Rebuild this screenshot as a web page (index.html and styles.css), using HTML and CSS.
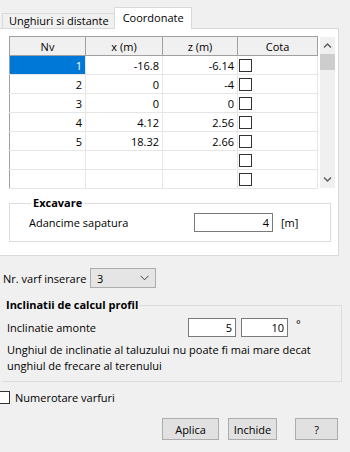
FILE: index.html
```html
<!DOCTYPE html>
<html lang="ro">
  <head>
    <meta charset="UTF-8" />
    <meta name="viewport" content="width=device-width, initial-scale=1.0" />
    <title>Coordonate</title>
    <link rel="stylesheet" href="styles.css">
  </head>
  <body>
    <div class="tabs">
      <div class="tab">Unghiuri si distante</div>
      <div class="tab active">Coordonate</div>
    </div>
    <div class="panel">
      <div class="grid">
        <table class="coords">
          <tr>
            <th class="c-nv">Nv</th>
            <th class="c-x">x (m)</th>
            <th class="c-z">z (m)</th>
            <th class="c-cota">Cota</th>
          </tr>
          <tr><td class="sel">1</td><td>-16.8</td><td>-6.14</td><td class="cota"><span class="check"></span></td></tr>
          <tr><td>2</td><td>0</td><td>-4</td><td class="cota"><span class="check"></span></td></tr>
          <tr><td>3</td><td>0</td><td>0</td><td class="cota"><span class="check"></span></td></tr>
          <tr><td>4</td><td>4.12</td><td>2.56</td><td class="cota"><span class="check"></span></td></tr>
          <tr><td>5</td><td>18.32</td><td>2.66</td><td class="cota"><span class="check"></span></td></tr>
          <tr><td></td><td></td><td></td><td class="cota"><span class="check"></span></td></tr>
          <tr><td></td><td></td><td></td><td class="cota"><span class="check"></span></td></tr>
        </table>
        <div class="vscroll">
          <svg class="arrow" width="15" height="17" viewBox="0 0 15 17">
            <path d="M4 10.5 L7.5 7 L11 10.5" fill="none" stroke="#606060" stroke-width="1.5" />
          </svg>
          <div class="thumb"></div>
          <div class="track"></div>
          <svg class="arrow" width="15" height="17" viewBox="0 0 15 17">
            <path d="M4 6.5 L7.5 10 L11 6.5" fill="none" stroke="#606060" stroke-width="1.5" />
          </svg>
        </div>
      </div>
      <fieldset class="group excavare">
        <legend>Excavare</legend>
        <div class="field-row">
          <span class="label">Adancime sapatura</span>
          <input type="text" class="num depth" value="4" />
          <span class="unit">[m]</span>
        </div>
      </fieldset>
    </div>

    <div class="insert-row">
      <span class="label">Nr. varf inserare</span>
      <div class="combo">
        <span>3</span>
        <svg width="9" height="6" viewBox="0 0 9 6">
          <path d="M0.5 0.8 L4.5 4.8 L8.5 0.8" fill="none" stroke="#404040" stroke-width="1" />
        </svg>
      </div>
    </div>

    <fieldset class="group profil">
      <legend>Inclinatii de calcul profil</legend>
      <div class="field-row">
        <span class="label">Inclinatie amonte</span>
        <input type="text" class="num a1" value="5" />
        <input type="text" class="num a2" value="10" />
        <span class="deg">°</span>
      </div>
      <p class="note">Unghiul de inclinatie al taluzului nu poate fi mai mare decat unghiul de frecare al terenului</p>
    </fieldset>

    <label class="check-row"><span class="check"></span>Numerotare varfuri</label>

    <div class="buttons">
      <button type="button" class="b-aplica">Aplica</button>
      <button type="button" class="b-inchide">Inchide</button>
      <button type="button" class="b-help">?</button>
    </div>
  </body>
</html>
```

FILE: styles.css
```css
body {
  margin: 0;
  width: 350px;
  height: 452px;
  overflow: hidden;
  background: #f0f0f0;
  color: #000000;
  font-family: "Open Sans", "Noto Sans", sans-serif;
  font-size: 11px;
}
.tabs {
  display: flex;
  align-items: flex-end;
  height: 29px;
  padding-left: 2px;
  margin-bottom: -1px;
  position: relative;
  z-index: 1;
}
.tab {
  height: 14px;
  line-height: 13px;
  padding: 0 5px 0 6px;
  border: 1px solid #d9d9d9;
  border-bottom: none;
  margin-bottom: 1px;
}
.tab.active {
  height: 21px;
  line-height: 19px;
  padding: 0 7px 0 8px;
  background: #ffffff;
  margin-bottom: 0;
  margin-left: -1px;
}
.panel {
  box-sizing: border-box;
  width: 340px;
  height: 228px;
  margin-left: -1px;
  padding: 7px 7px 0 9px;
  background: #ffffff;
  border: 1px solid #d9d9d9;
}
.grid {
  display: flex;
  height: 152px;
}
.coords {
  border-collapse: collapse;
  table-layout: fixed;
  width: 304px;
  align-self: flex-start;
}
.coords tr {
  height: 19px;
}
.coords th {
  padding: 0;
  font-weight: normal;
  background: #f0f0f0;
  border: 1px solid #a0a0a0;
  height: 17px;
}
.c-nv { width: 75px; }
.c-x { width: 76px; }
.c-z { width: 74px; }
.c-cota { width: 79px; }
.coords td {
  padding: 0 3px 0 0;
  height: 18px;
  text-align: right;
  border-right: 1px solid #e6e6e6;
  border-bottom: 1px solid #e6e6e6;
}
.coords td:first-child {
  border-left: 1px solid #a0a0a0;
}
.coords td.sel {
  background: #0078d7;
  color: #ffffff;
}
.coords td.cota {
  text-align: left;
  padding: 0 0 0 1px;
  line-height: 0;
}
.check {
  display: inline-block;
  flex: none;
  box-sizing: border-box;
  width: 13px;
  height: 13px;
  border: 1px solid #333333;
  background: #ffffff;
}
.vscroll {
  display: flex;
  flex-direction: column;
  width: 15px;
  margin: 1px 0 0 2px;
  background: #f0f0f0;
}
.vscroll .arrow {
  display: block;
  flex: none;
}
.thumb {
  height: 16px;
  background: #cdcdcd;
}
.track {
  flex: 1;
}
.group {
  margin: 0;
  padding: 0;
  border: 1px solid #dcdcdc;
}
.group legend {
  padding: 0 2px;
  font-weight: bold;
  line-height: 16px;
}
.excavare {
  width: 322px;
  box-sizing: border-box;
  margin-top: 7px;
  padding: 2px 0 9px 19px;
}
.excavare legend {
  margin-left: 2px;
}
.field-row {
  display: flex;
  align-items: center;
  height: 19px;
}
.excavare .label {
  width: 165px;
}
.profil .label {
  width: 181px;
}
.num {
  box-sizing: border-box;
  height: 19px;
  margin: 0;
  padding: 0 3px 0 0;
  border: 1px solid #7a7a7a;
  background: #ffffff;
  text-align: right;
  font: inherit;
  color: #000000;
}
.depth {
  width: 79px;
}
.unit {
  margin-left: 8px;
}
.insert-row {
  display: flex;
  align-items: center;
  margin: 12px 0 0 3px;
}
.insert-row .label {
  width: 87px;
}
.combo {
  box-sizing: border-box;
  display: flex;
  align-items: center;
  justify-content: space-between;
  width: 66px;
  height: 20px;
  padding: 0 6px 0 6px;
  background: #e5e5e5;
  border: 1px solid #adadad;
}
.profil {
  box-sizing: border-box;
  width: 339px;
  margin: 9px 0 0 3px;
  padding: 5px 0 7px 4px;
  border-left: none;
}
.profil legend {
  margin-left: -3px;
}
.a1 {
  width: 48px;
}
.a2 {
  width: 47px;
  margin-left: 5px;
}
.deg {
  margin-left: 8px;
  align-self: flex-start;
  line-height: 12px;
}
.note {
  margin: 5px 0 0 0;
  line-height: 16px;
  width: 320px;
}
.check-row {
  display: flex;
  align-items: center;
  margin: 8px 0 0 -3px;
}
.check-row .check {
  margin-right: 5px;
}
.buttons {
  display: flex;
  justify-content: flex-end;
  margin-top: 13px;
  padding-right: 12px;
}
.buttons button {
  box-sizing: border-box;
  height: 22px;
  padding: 0;
  background: #e1e1e1;
  border: 1px solid #adadad;
  font: inherit;
  color: #000000;
}
.b-aplica { width: 57px; }
.b-inchide { width: 49px; margin-left: 9px; }
.b-help { width: 43px; margin-left: 18px; }
```
